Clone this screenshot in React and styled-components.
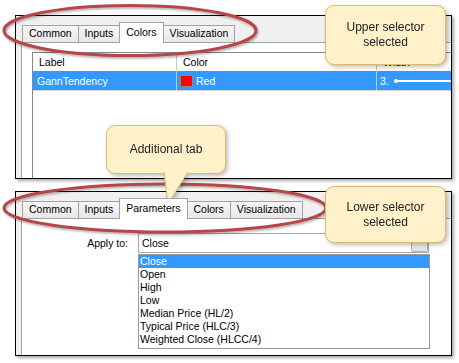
import React from 'react';
import styled, { createGlobalStyle } from 'styled-components';

const Global = createGlobalStyle`
  html, body { margin: 0; padding: 0; background: #fff; }
  body { font-family: "Liberation Sans", Arial, sans-serif; }
  #root { width: 459px; height: 363px; }
`;

const Page = styled.div`
  position: relative;
  box-sizing: border-box;
  width: 459px;
  height: 363px;
  overflow: hidden;
  padding: 15px 0 0 15px;
  display: flex;
  flex-direction: column;
  gap: 12px;
  background: #fff;
`;

const Panel = styled.section`
  box-sizing: border-box;
  width: 437px;
  height: ${p => p.$h}px;
  border: 1px solid #000;
  background: #f0f0f0;
  box-shadow: 2px 2px 3px rgba(0, 0, 0, 0.35);
  display: flex;
  flex-direction: column;
  overflow: hidden;
`;

const TabStrip = styled.div`
  flex: none;
  height: 26px;
  padding-left: 6px;
  display: flex;
  align-items: flex-end;
  position: relative;
  z-index: 1;
`;

const Tab = styled.div`
  box-sizing: border-box;
  height: ${p => (p.$active ? 21 : 17)}px;
  margin-bottom: ${p => (p.$active ? -1 : 0)}px;
  padding: 0 6px;
  border: 1px solid #a3a3a3;
  border-bottom: none;
  background: ${p => (p.$active ? '#fff' : 'linear-gradient(#f5f5f5, #e8e8e8)')};
  font-size: 10.5px;
  line-height: ${p => (p.$active ? 19 : 15)}px;
  color: #000;
  white-space: nowrap;
  & + & { margin-left: -1px; }
`;

const TabPage = styled.div`
  flex: 1;
  min-height: 0;
  margin-left: 5px;
  background: #fff;
  border-top: 1px solid #a3a3a3;
  border-left: 1px solid #a3a3a3;
  overflow: hidden;
  padding: ${p => p.$pad};
  display: flex;
  flex-direction: column;
`;

const Grid = styled.div`
  flex: 1;
  width: 560px;
  border-left: 1px solid #828790;
  border-top: 1px solid #828790;
`;

const GridRow = styled.div`
  display: grid;
  grid-template-columns: 144px 200px 1fr;
  height: ${p => (p.$head ? 18 : 19)}px;
  background: ${p => (p.$selected ? '#3399ff' : '#fff')};
  color: ${p => (p.$selected ? '#fff' : '#000')};
  border-bottom: ${p => (p.$head ? 'none' : '1px solid #d4d4d4')};
  font-size: 10.5px;
`;

const Cell = styled.div`
  display: flex;
  align-items: center;
  gap: 3px;
  padding-left: ${p => p.$pad}px;
  border-right: 1px solid #c8c8c8;
  white-space: nowrap;
  overflow: hidden;
`;

const Swatch = styled.span`
  box-sizing: border-box;
  width: 13px;
  height: 12px;
  background: #ff0000;
  border: 1px solid #8a8a8a;
`;

const LineSample = styled.span`
  flex: 1;
  height: 2px;
  margin-left: 4px;
  background: #fff;
  position: relative;
  &::before {
    content: '';
    position: absolute;
    left: -2px;
    top: -1px;
    width: 4px;
    height: 4px;
    border-radius: 50%;
    background: #fff;
  }
`;

const Form = styled.div`
  display: grid;
  grid-template-columns: 106px 291px;
  column-gap: 10px;
  font-size: 10.5px;
`;

const FieldLabel = styled.div`
  text-align: right;
  align-self: center;
  color: #000;
`;

const Combo = styled.div`
  box-sizing: border-box;
  height: 20px;
  border: 1px solid #a9a9a9;
  background: #fff;
  display: flex;
  align-items: center;
  padding-left: 3px;
  color: #000;
`;

const DropButton = styled.span`
  box-sizing: border-box;
  margin-left: auto;
  margin-top: 2px;
  width: 17px;
  height: 16px;
  border: 1px solid #b0b0b0;
  border-radius: 2px;
  background: linear-gradient(#f7f7f7, #e2e2e2);
`;

const List = styled.ul`
  grid-column: 2;
  margin: 1px 0 0 0;
  padding: 0 0 2px 0;
  list-style: none;
  width: 292px;
  box-sizing: border-box;
  border: 1px solid #9a9a9a;
  background: #fff;
`;

const Item = styled.li`
  height: 13px;
  line-height: 13px;
  padding-left: 1px;
  background: ${p => (p.$selected ? '#3399ff' : 'transparent')};
  color: ${p => (p.$selected ? '#fff' : '#000')};
  white-space: nowrap;
`;

const Rings = styled.svg`
  position: absolute;
  left: 0;
  top: 0;
  pointer-events: none;
`;

const Callout = styled.div`
  position: absolute;
  box-sizing: border-box;
  left: ${p => p.$x}px;
  top: ${p => p.$y}px;
  width: ${p => p.$w}px;
  height: ${p => p.$h}px;
  border: 1px solid #d9bb6a;
  border-radius: 9px;
  background: #fff1c9;
  filter: drop-shadow(2px 2px 2px rgba(0, 0, 0, 0.25));
  display: flex;
  align-items: center;
  justify-content: center;
  text-align: center;
  font-size: 12px;
  line-height: 15px;
  color: #222;
`;

const Tail = styled.svg`
  position: absolute;
  left: 50px;
  top: 46px;
  overflow: visible;
`;

const tabs1 = ['Common', 'Inputs', 'Colors', 'Visualization'];
const tabs2 = ['Common', 'Inputs', 'Parameters', 'Colors', 'Visualization'];
const prices = [
  'Close',
  'Open',
  'High',
  'Low',
  'Median Price (HL/2)',
  'Typical Price (HLC/3)',
  'Weighted Close (HLCC/4)',
];

export default function App() {
  return (
    <>
      <Global />
      <Page>
        <Panel $h={164}>
          <TabStrip>
            {tabs1.map(t => (
              <Tab key={t} $active={t === 'Colors'}>{t}</Tab>
            ))}
          </TabStrip>
          <TabPage $pad="9px 0 0 10px">
            <Grid>
              <GridRow $head>
                <Cell $pad={6}>Label</Cell>
                <Cell $pad={6}>Color</Cell>
                <Cell $pad={6}>Width</Cell>
              </GridRow>
              <GridRow $selected>
                <Cell $pad={4}>GannTendency</Cell>
                <Cell $pad={3}><Swatch />Red</Cell>
                <Cell $pad={3}>3.<LineSample /></Cell>
              </GridRow>
            </Grid>
          </TabPage>
        </Panel>

        <Panel $h={165}>
          <TabStrip>
            {tabs2.map(t => (
              <Tab key={t} $active={t === 'Parameters'}>{t}</Tab>
            ))}
          </TabStrip>
          <TabPage $pad="14px 0 0 0">
            <Form>
              <FieldLabel>Apply to:</FieldLabel>
              <Combo>
                Close
                <DropButton />
              </Combo>
              <List>
                {prices.map((p, i) => (
                  <Item key={p} $selected={i === 0}>{p}</Item>
                ))}
              </List>
            </Form>
          </TabPage>
        </Panel>

        <Rings width="459" height="363" viewBox="0 0 459 363">
          <defs>
            <filter id="ringShadow" x="-10%" y="-30%" width="120%" height="160%">
              <feDropShadow dx="1" dy="1.5" stdDeviation="1.2" floodColor="#000" floodOpacity="0.35" />
            </filter>
          </defs>
          <ellipse cx="130" cy="30.5" rx="126" ry="25" fill="none" stroke="#b5474a" strokeWidth="3" filter="url(#ringShadow)" />
          <ellipse cx="165" cy="208" rx="161" ry="24" fill="none" stroke="#b5474a" strokeWidth="3" filter="url(#ringShadow)" />
        </Rings>

        <Callout $x={325} $y={5} $w={121} $h={60}>
          Upper selector<br />selected
        </Callout>
        <Callout $x={106} $y={125} $w={120} $h={49}>
          Additional tab
          <Tail width="40" height="34" viewBox="0 0 40 34">
            <path d="M7 0 L11 32 L31 0" fill="#fff1c9" stroke="#d9bb6a" strokeWidth="1" />
          </Tail>
        </Callout>
        <Callout $x={325} $y={186} $w={121} $h={57}>
          Lower selector<br />selected
        </Callout>
      </Page>
    </>
  );
}
